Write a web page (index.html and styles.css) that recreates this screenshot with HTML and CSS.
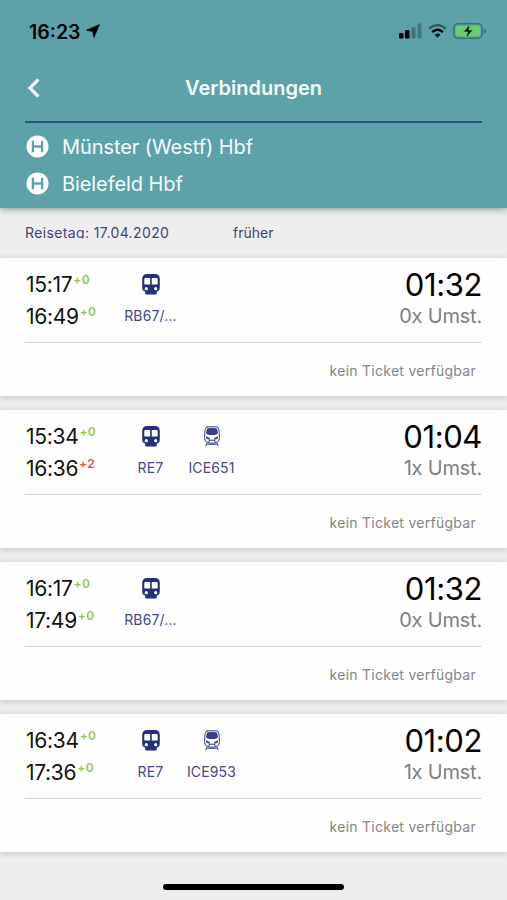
FILE: index.html
```html
<!DOCTYPE html>
<html lang="de">
<head>
<meta charset="utf-8">
<title>Verbindungen</title>
<link rel="stylesheet" href="styles.css">
</head>
<body>
<svg class="defs" width="0" height="0">
  <symbol id="train" viewBox="0 0 18 21">
    <path fill="currentColor" fill-rule="evenodd" d="M4.500 0h9Q17.800.7 17.800 5v8.500q0 3.500-3 4V19.500q0 1-1 1H4.200q-1 0-1-1V17.500q-3-.5-3-4V5Q.2.700 4.500 0ZM3.300 4q-1 0-1 1V9.800q0 .8.800.8H8.200V4ZM9.800 4v6.600h5.100q.8 0 .8-.8V5q0-1-1-1ZM4.300 13.100a1.600 1.600 0 1 0 0 3.200 1.600 1.600 0 0 0 0-3.200ZM13.700 13.100a1.600 1.600 0 1 0 0 3.200 1.600 1.600 0 0 0 0-3.200Z"/>
  </symbol>
  <symbol id="ice" viewBox="0 0 18 21">
    <g fill="none" stroke="currentColor" stroke-width="1" stroke-linejoin="round" stroke-linecap="round">
      <path d="M4.300.8h9.400q2 .5 2.200 3l.6 7.700q.2 4-2.400 4.800l-3 .9H6.900l-3-.9q-2.600-.8-2.400-4.800l.6-7.700Q2.300 1.300 4.300.8Z"/>
      <path d="M6.500 14.200h5M6.500 14.200l-1 2.400M11.500 14.200l1 2.400M4.300 17l-1.600 3M13.700 17l1.600 3M4.500 18.300h9"/>
    </g>
    <path fill="currentColor" d="M4.300 2.200Q9 1.600 13.700 2.200q1 1.700 1.200 5Q13.400 9 11.800 9H6.200Q4.600 9 3.100 7.200q.2-3.300 1.200-5ZM2.800 10.300l4 1.700-.3 1.900-3.500-1.600ZM15.200 10.300l-4 1.700.3 1.900 3.500-1.600Z"/>
  </symbol>
  <symbol id="stop" viewBox="0 0 23 23">
    <circle cx="11.500" cy="11.500" r="11" fill="#fff"/>
    <path d="M6.900 5.800v11.400M16.100 5.800v11.400M6.900 11.500h9.200" stroke="#5da2a8" stroke-width="2.300" fill="none"/>
  </symbol>
</svg>

<header class="header">
  <div class="status">
    <span class="clock">16:23</span>
    <svg class="location" width="14" height="14" viewBox="0 0 14 14"><path d="M13.300.7 8 13.300 6.800 7.300.6 6.200Z" stroke="#000" stroke-width=".8" stroke-linejoin="round"/></svg>
    <svg class="signal" width="24" height="16" viewBox="0 0 24 16"><rect x="0" y="10" width="4.500" height="5.500" rx="1.200"/><rect x="6" y="7" width="4.500" height="8.500" rx="1.200"/><g opacity=".27"><rect x="12.500" y="4" width="4" height="11.500" rx="1.200"/><rect x="18.500" y=".5" width="4" height="15" rx="1.200"/></g></svg>
    <svg class="wifi" width="19" height="14" viewBox="0 0 19 14"><path d="M1.200 4.600q8.300-7 16.600 0" fill="none" stroke="#000" stroke-opacity=".45" stroke-width="2.300"/><path d="M4.200 8q5.300-4.400 10.600 0" fill="none" stroke="#000" stroke-width="2.400"/><path d="M6.600 10.700q2.900-2.400 5.800 0L9.500 13.600Z"/></svg>
    <svg class="battery" width="34" height="16" viewBox="0 0 34 16"><rect x=".8" y=".8" width="28.400" height="14.400" rx="4.200" fill="none" stroke="#397074" stroke-width="1.500"/><rect x="2.800" y="2.800" width="24.400" height="10.400" rx="2.400" fill="#68ce67"/><path d="M31 5.300q2.200 1 2.200 2.700T31 10.700Z" fill="#397074"/><path d="M17 1 10.600 8.900h4L13.200 15 19.800 7h-4Z" stroke="#68ce67" stroke-width=".7"/></svg>
  </div>
  <div class="titlebar">
    <svg class="back" width="13" height="20" viewBox="0 0 13 20"><path d="M11.300 1.500 3 10l8.300 8.500" fill="none" stroke="#fff" stroke-width="3.200"/></svg>
    <h1>Verbindungen</h1>
  </div>
  <div class="route">
    <div class="stop"><svg width="23" height="23"><use href="#stop"/></svg><span>Münster (Westf) Hbf</span></div>
    <div class="stop"><svg width="23" height="23"><use href="#stop"/></svg><span>Bielefeld Hbf</span></div>
  </div>
</header>

<div class="datebar"><span class="date">Reisetag: 17.04.2020</span><span class="earlier">früher</span></div>

<main class="list">
  <article class="card">
    <div class="top">
      <div class="times"><div>15:17<span class="delay">+0</span></div><div>16:49<span class="delay">+0</span></div></div>
      <div class="lines"><div class="line"><svg class="ic"><use href="#train"/></svg><span>RB67/...</span></div></div>
      <div class="sum"><div class="duration">01:32</div><div class="changes">0x Umst.</div></div>
    </div>
    <div class="ticket">kein Ticket verfügbar</div>
  </article>
  <article class="card">
    <div class="top">
      <div class="times"><div>15:34<span class="delay">+0</span></div><div>16:36<span class="delay late">+2</span></div></div>
      <div class="lines"><div class="line"><svg class="ic"><use href="#train"/></svg><span>RE7</span></div><div class="line"><svg class="ic ice"><use href="#ice"/></svg><span>ICE651</span></div></div>
      <div class="sum"><div class="duration">01:04</div><div class="changes">1x Umst.</div></div>
    </div>
    <div class="ticket">kein Ticket verfügbar</div>
  </article>
  <article class="card">
    <div class="top">
      <div class="times"><div>16:17<span class="delay">+0</span></div><div>17:49<span class="delay">+0</span></div></div>
      <div class="lines"><div class="line"><svg class="ic"><use href="#train"/></svg><span>RB67/...</span></div></div>
      <div class="sum"><div class="duration">01:32</div><div class="changes">0x Umst.</div></div>
    </div>
    <div class="ticket">kein Ticket verfügbar</div>
  </article>
  <article class="card">
    <div class="top">
      <div class="times"><div>16:34<span class="delay">+0</span></div><div>17:36<span class="delay">+0</span></div></div>
      <div class="lines"><div class="line"><svg class="ic"><use href="#train"/></svg><span>RE7</span></div><div class="line"><svg class="ic ice"><use href="#ice"/></svg><span>ICE953</span></div></div>
      <div class="sum"><div class="duration">01:02</div><div class="changes">1x Umst.</div></div>
    </div>
    <div class="ticket">kein Ticket verfügbar</div>
  </article>
</main>
<div class="home"></div>
</body>
</html>
```
FILE: styles.css
```css
* { box-sizing: border-box; }
body {
  margin: 0;
  height: 900px;
  overflow: hidden;
  background: #eee;
  font-family: Inter, "Liberation Sans", sans-serif;
  color: #111;
  display: flex;
  flex-direction: column;
}
svg { display: block; flex: none; }
.defs { display: none; }
.header {
  flex: none;
  height: 208px;
  background: #5da2a8;
  box-shadow: 0 1px 7px rgba(0, 60, 65, .5);
  padding: 0 25px;
  z-index: 1;
}
.status {
  height: 62px;
  display: flex;
  align-items: center;
  margin-right: -5px;
  padding-left: 4px;
  color: #000;
}
.clock { font-size: 19.5px; font-weight: 600; width: 57px; padding-top: 1px; white-space: nowrap; }
.signal { margin-left: auto; }
.wifi { margin-left: 5px; }
.battery { margin-left: 6px; }
.titlebar {
  height: 61px;
  border-bottom: 2px solid #2d5487;
  display: grid;
  grid-template-columns: 13px 1fr 13px;
  align-items: center;
  padding: 0 2px 7px;
}
h1 {
  margin: 0;
  font-size: 20px;
  font-weight: 600;
  line-height: 26px;
  color: #f4fbfd;
  text-align: center;
}
.route { padding: 5px 1px 0; }
.stop {
  height: 37px;
  display: flex;
  align-items: center;
  gap: 13px;
  font-size: 20px;
  letter-spacing: -.08px;
  color: #f4fbfd;
}
.datebar {
  flex: none;
  height: 50px;
  display: flex;
  padding-left: 25px;
  line-height: 50px;
  font-size: 14px;
  color: #45437f;
}
.date {
  align-self: flex-start;
  height: 20px;
  margin-top: 15px;
  line-height: 20px;
  width: 208px;
  white-space: nowrap;
  letter-spacing: .38px;
  clip-path: inset(0 0 -0.5px 0);
}
.date { height: 15px; }
.list { display: flex; flex-direction: column; gap: 14px; }
.card {
  height: 138px;
  padding: 0 25px;
  background: #fefefe;
  box-shadow: 0 1px 7px rgba(0, 0, 0, .2);
}
.top {
  height: 85px;
  border-bottom: 1px solid #d3d6d8;
  display: flex;
}
.times {
  width: 95px;
  padding: 11px 0 0 1px;
  font-size: 21px;
  letter-spacing: -.3px;
  line-height: 32px;
  white-space: nowrap;
}
.times div { height: 32px; }
.delay {
  font-size: 12px;
  font-weight: 600;
  letter-spacing: .3px;
  line-height: 1;
  vertical-align: 8px;
  color: #98c353;
  margin-left: 1px;
}
.late { color: #e2524a; }
.lines { flex: 1; display: flex; padding-top: 16px; }
.line {
  width: 61px;
  display: flex;
  flex-direction: column;
  align-items: center;
  gap: 11px;
  font-size: 14px;
  letter-spacing: .15px;
  line-height: 20px;
  color: #45478c;
  white-space: nowrap;
}
.ic { width: 18px; height: 21px; color: #24317a; }
.ice { color: #343f85; }
.sum { text-align: right; padding-top: 9px; }
.duration { font-size: 31px; line-height: 34px; letter-spacing: -.4px; color: #000; padding-top: 1px; height: 34px; }
.changes { font-size: 20px; line-height: 30px; letter-spacing: -.2px; color: #808080; }
.ticket {
  height: 53px;
  line-height: 56px;
  padding-right: 6px;
  text-align: right;
  font-size: 14px;
  letter-spacing: .27px;
  color: #858585;
}
.home {
  width: 181px;
  height: 6px;
  border-radius: 3px;
  background: #000;
  margin: 32px auto 0;
}
```
